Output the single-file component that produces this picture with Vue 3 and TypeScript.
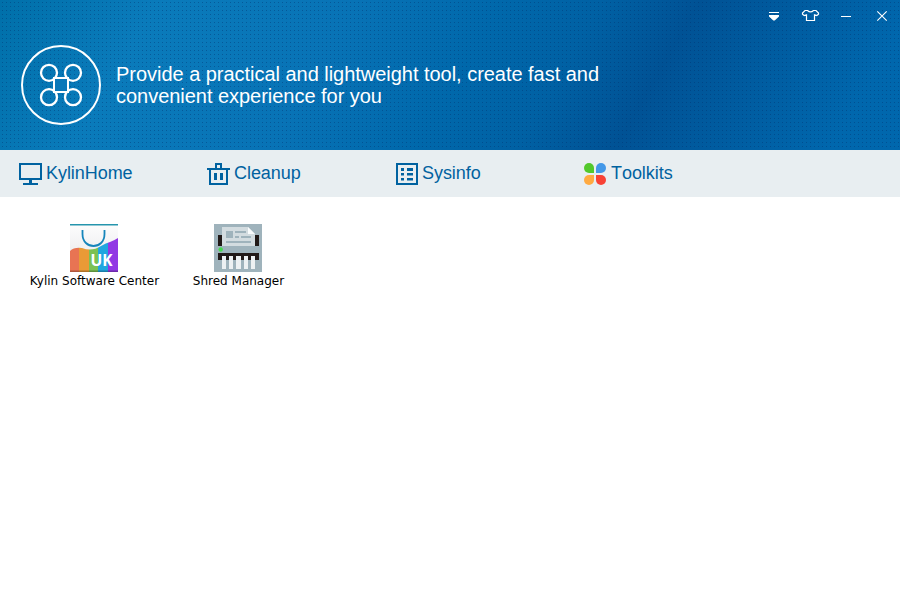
<script setup lang="ts">
import { ref } from 'vue'

interface Tab { id: string; label: string }
const tabs: Tab[] = [
  { id: 'home', label: 'KylinHome' },
  { id: 'clean', label: 'Cleanup' },
  { id: 'info', label: 'Sysinfo' },
  { id: 'tools', label: 'Toolkits' },
]
const active = ref('tools')
</script>

<template>
  <div class="window">
    <header class="banner">
      <div class="controls">
        <svg width="36" height="32" viewBox="0 0 36 32"><path d="M5 12h10v1H5zM5 15h10v1.500l-4.300 4h-1.400l-4.300-4z" fill="#fff" /></svg>
        <svg width="36" height="32" viewBox="0 0 36 32"><path class="shirt" d="M7.500 10.500H5L2.500 13V14.300L4.200 15.500L6.500 14.800V20.500H14.500V14.800L16.800 15.500L18.500 14.300V13L16 10.500H13.500Q10.500 13.200 7.500 10.500Z" /></svg>
        <svg width="36" height="32" viewBox="0 0 36 32"><path d="M5 16h10v1H5z" fill="#fff" /></svg>
        <svg width="36" height="32" viewBox="0 0 36 32"><path d="M5.300 11.300l9.400 9.400M14.700 11.300l-9.400 9.400" stroke="#fff" stroke-width="1.100" /></svg>
      </div>
      <div class="intro">
        <svg class="logo" width="80" height="80" viewBox="0 0 80 80" fill="none" stroke="#fff" stroke-width="2">
          <circle cx="40" cy="40" r="39" />
          <g stroke-width="2.300">
            <circle cx="28" cy="27.800" r="8" />
            <circle cx="52" cy="27.800" r="8" />
            <circle cx="28" cy="52.200" r="8" />
            <circle cx="52" cy="52.200" r="8" />
          </g>
          <rect class="hub" x="33" y="33" width="14" height="14" />
        </svg>
        <p class="slogan">Provide a practical and lightweight tool, create fast and<br />convenient experience for you</p>
      </div>
    </header>

    <nav class="tabs">
      <button v-for="t in tabs" :key="t.id" class="tab" type="button" @click="active = t.id">
        <svg v-if="t.id === 'home'" width="24" height="24" viewBox="0 0 24 24" fill="#0062a0">
          <path fill-rule="evenodd" d="M0 1h23v17H0zM2 3v13h19V3z" /><path d="M10 18h3v3h6v2H4v-2h6z" />
        </svg>
        <svg v-else-if="t.id === 'clean'" width="24" height="24" viewBox="0 0 24 24" fill="#0062a0">
          <path fill-rule="evenodd" d="M8 1h7v5h8v2h-2v15H2V8H0V6h8zM10 3v3h3V3zM4 8v13h15V8z" /><path d="M7 11h3v7H7zM13 11h3v7h-3z" />
        </svg>
        <svg v-else-if="t.id === 'info'" width="24" height="24" viewBox="0 0 24 24" fill="#0062a0">
          <path fill-rule="evenodd" d="M0 1h22v22H0zM2 3v18h18V3z" /><path d="M5 6h3v3H5zM11 6h6v3h-6zM5 11h3v2.500H5zM11 11h6v2.500h-6zM5 16h3v2.500H5zM11 16h6v2.500h-6z" />
        </svg>
        <svg v-else width="24" height="24" viewBox="0 0 24 24">
          <path d="M5 1a5 5 0 0 1 5 5v5H5A5 5 0 0 1 5 1z" fill="#52c82b" />
          <path d="M17 1a5 5 0 0 1 0 10h-5V6a5 5 0 0 1 5-5z" fill="#4398e8" />
          <path d="M5 13h5v5a5 5 0 1 1-5-5z" fill="#ffaa41" />
          <path d="M12 13h5a5 5 0 1 1-5 5z" fill="#f84236" />
        </svg>
        <span class="name">{{ t.label }}</span>
      </button>
    </nav>

    <main class="apps">
      <div class="app">
        <svg width="48" height="48" viewBox="0 0 48 48">
          <defs>
            <linearGradient id="bag" x2="0" y2="1"><stop stop-color="#fdfdfd" /><stop offset="1" stop-color="#e4e5e7" /></linearGradient>
            <clipPath id="wave"><path d="M0 27Q4 23 12 24Q22 28 31 22Q36 19 40 18Q45 16 48 14V48H0z" /></clipPath>
          </defs>
          <path d="M0 0h48v48H0z" fill="url(#bag)" />
          <path d="M0 0h48v1.500H0z" fill="#2695ad" />
          <path d="M12.500 6v4c0 16 22 16 22 0V6" fill="none" stroke="#1685bb" stroke-width="1.800" />
          <g clip-path="url(#wave)">
            <path d="M0 10h9v38H0z" fill="#e87453" /><path d="M9 10h10v38H9z" fill="#e99a36" /><path d="M19 10h9v38h-9z" fill="#7cc153" /><path d="M28 10h10v38H28z" fill="#20a6df" /><path d="M38 10h10v38H38z" fill="#9138e4" />
          </g>
          <path d="M0 46.500h48V48H0z" fill="#000" opacity=".25" />
          <text class="uk" x="20.500" y="41.700">UK</text>
        </svg>
        <span class="caption">Kylin Software Center</span>
      </div>
      <div class="app">
        <svg width="48" height="48" viewBox="0 0 48 48">
          <path d="M0 0h48v48H0z" fill="#9fb3bc" />
          <path d="M4 11h4v11H4zM41 11h4v11h-4zM4 29h41v7H4z" fill="#211918" />
          <path d="M8 3h26l7 7v12H8z" fill="#d3dce0" />
          <path d="M34 3l7 7h-7z" fill="#f8fbfc" />
          <path d="M12 7h7v7h-7zM21 7h11v2H21zM21 12h4v2h-4zM27 12h10v2H27zM12 17h25v2H12z" fill="#9fb3bc" />
          <circle cx="6.700" cy="25.500" r="2.200" fill="#45da50" />
          <path d="M8 32h4v13H8zM15 32h4v13h-4zM22 32h5v13h-5zM30 32h4v13h-4zM37 32h4v13h-4z" fill="#edf1f3" />
        </svg>
        <span class="caption">Shred Manager</span>
      </div>
    </main>
  </div>
</template>

<style>
body { margin: 0; }
</style>

<style scoped>
.window { width: 900px; height: 600px; background: #fff; overflow: hidden; }
.banner {
  height: 150px;
  background:
    url("data:image/svg+xml,%3Csvg xmlns='http://www.w3.org/2000/svg' width='4' height='4'%3E%3Crect x='2' y='2' width='1' height='1' fill='%23002d69' fill-opacity='.4'/%3E%3C/svg%3E") 0 0 / 4px 4px,
    linear-gradient(120deg, #0070aa 0%, #0a7bbb 16%, #0873b6 36%, #0068ab 51%, #0061a4 61%, #005295 71%, #005b9f 80%, #0067ad 93%, #0067ad 100%);
}
.controls { display: flex; justify-content: flex-end; height: 32px; margin-right: -8px; }
.shirt { fill: none; stroke: #fff; stroke-width: 1.200; }
.intro { display: flex; align-items: flex-start; padding: 13px 0 0 21px; }
.logo { flex: none; }
.hub { fill: #0a78b9; }
.slogan { margin: 18px 0 0 15px; color: #fff; font: 20px/22px "Liberation Sans", Arial, sans-serif; letter-spacing: -.03px; white-space: nowrap; }
.tabs { display: grid; grid-template-columns: 188px 189px 188px 188px; height: 47px; background: #e8eef1; padding-left: 19px; }
.tab { display: flex; align-items: flex-start; padding: 12px 0 0; border: 0; background: none; }
.tab svg { flex: none; }
.name { margin-left: 3px; color: #0062a0; font: 18px/22px "Liberation Sans", Arial, sans-serif; font-kerning: none; letter-spacing: -.05px; }
.tab:nth-child(3) .name { margin-left: 2px; }
.apps { display: flex; padding: 27px 0 0 22px; }
.app { display: flex; flex-direction: column; align-items: center; width: 144px; }
.caption { margin-top: 1px; padding-left: 1px; color: #000; font: 12px/16px "DejaVu Sans", sans-serif; white-space: nowrap; }
.uk { font: bold 15.500px "Open Sans", sans-serif; fill: #fff; }
</style>
